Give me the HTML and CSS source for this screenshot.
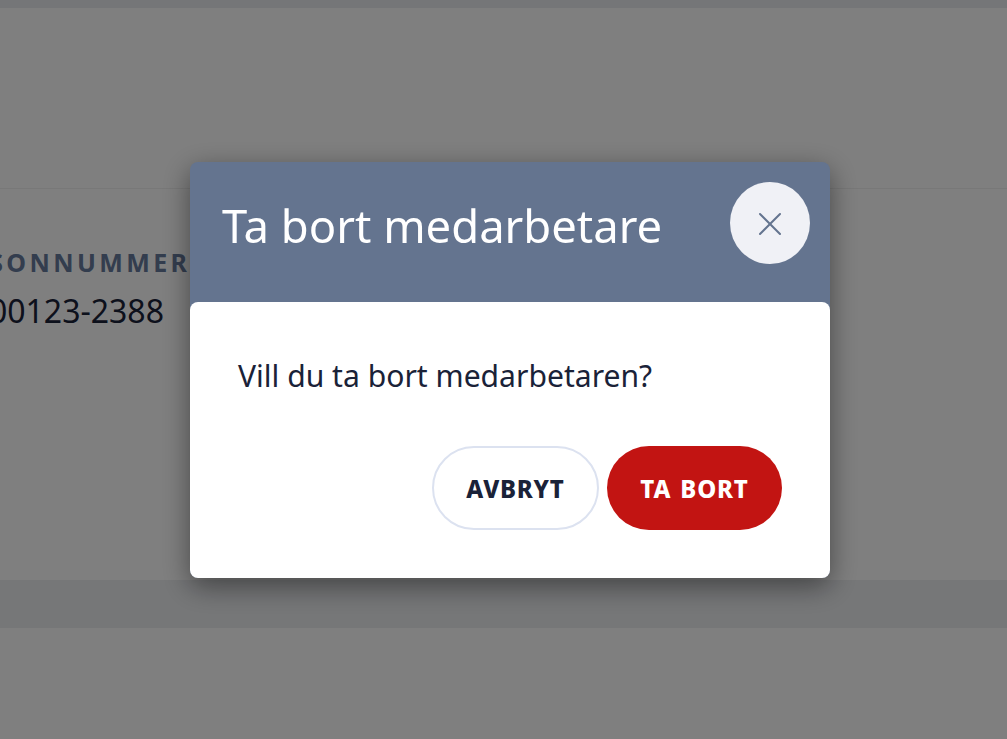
FILE: index.html
```html
<!DOCTYPE html>
<html lang="sv">
<head>
<meta charset="utf-8">
<title>Ta bort medarbetare</title>
<link rel="stylesheet" href="styles.css">
</head>
<body>
<div class="page">
  <div class="topbar"></div>
  <div class="hero"></div>
  <main class="panel">
    <div class="label">PERSONNUMMER</div>
    <div class="value">19900123-2388</div>
  </main>
  <div class="band"></div>
</div>
<div class="overlay">
  <section class="modal">
    <header class="modal-head">
      <h1 class="modal-title">Ta bort medarbetare</h1>
      <button class="close" aria-label="Stäng">
        <svg class="close-icon" viewBox="0 0 24 24" width="24" height="24" fill="none" stroke="#64748f" stroke-width="2" stroke-linecap="round"><path d="M2 2 L22 22 M22 2 L2 22"/></svg>
      </button>
    </header>
    <div class="modal-body">
      <p class="question">Vill du ta bort medarbetaren?</p>
      <div class="actions">
        <button class="btn btn-ghost">AVBRYT</button>
        <button class="btn btn-danger">TA BORT</button>
      </div>
    </div>
  </section>
</div>
</body>
</html>
```

FILE: styles.css
```css
* { box-sizing: border-box; }
html, body { margin: 0; height: 100%; overflow: hidden; background: #fff; font-family: "Noto Sans", "Open Sans", sans-serif; }
.page { height: 739px; display: flex; flex-direction: column; }
.topbar { height: 8px; background: #eaecf0; }
.hero { height: 181px; border-bottom: 1px solid #f0f0f0; }
.panel { height: 391px; padding-top: 57px; }
.label { margin-left: -67px; font-size: 25px; line-height: 32px; font-weight: 700; letter-spacing: 3.4px; color: #667a9c; white-space: nowrap; }
.value { margin-left: -66px; font-size: 32px; line-height: 40px; margin-top: 13px; color: #1a2238; white-space: nowrap; }
.band { height: 48px; background: #ecEEf1; }
.overlay { position: fixed; inset: 0; background: rgba(0,0,0,.5); }
.modal { position: absolute; left: 190px; top: 162px; width: 640px; height: 416px; display: flex; flex-direction: column; background: #64748f; border-radius: 8px; box-shadow: 0 8px 28px rgba(0,0,0,.45); }
.modal-head { height: 140px; padding: 20px 20px 0 32px; display: flex; justify-content: space-between; align-items: flex-start; }
.modal-title { margin: 15px 0 0; font-size: 45.4px; line-height: 56px; font-weight: 400; color: #fff; }
.close { width: 80px; height: 82px; border: 0; border-radius: 50%; background: #f0f1f6; padding: 2px 0 0; display: flex; align-items: center; justify-content: center; }
.close-icon { display: block; }
.modal-body { flex: 1; background: #fff; border-radius: 8px; padding: 54px 48px 48px; display: flex; flex-direction: column; }
.question { margin: 0; font-size: 30.1px; line-height: 40px; color: #1a2238; }
.actions { margin-top: 50px; display: flex; justify-content: flex-end; gap: 8px; }
.btn { height: 84px; border-radius: 42px; font-family: inherit; font-size: 24px; font-weight: 800; letter-spacing: 0.8px; word-spacing: 2px; }
.btn-ghost { width: 167px; background: #fff; border: 2px solid #dce2f0; color: #1a2238; }
.btn-danger { width: 175px; background: #c21412; border: 0; color: #fff; }
```
